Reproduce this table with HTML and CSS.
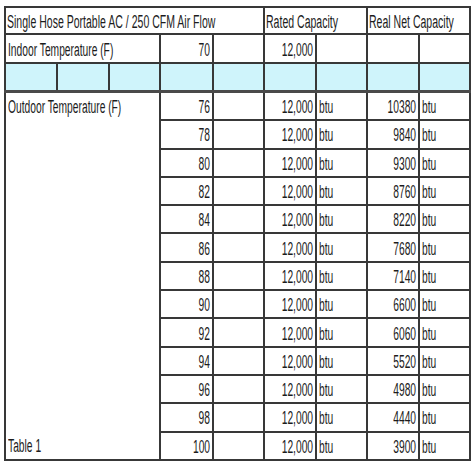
FILE: index.html
```html
<!DOCTYPE html>
<html>
<head>
<meta charset="utf-8">
<link rel="stylesheet" href="styles.css">
</head>
<body>
<table class="sheet">
  <colgroup>
    <col class="w52"><col class="w52"><col class="w51"><col class="w53"><col class="w51"><col class="w52"><col class="w51"><col class="w52"><col class="w51">
  </colgroup>
  <tr class="head">
    <td colspan="5" class="l"><div class="c"><span class="t">Single Hose Portable AC / 250 CFM Air Flow</span></div></td>
    <td colspan="2" class="l"><div class="c"><span class="t">Rated Capacity</span></div></td>
    <td colspan="2" class="l"><div class="c"><span class="t">Real Net Capacity</span></div></td>
  </tr>
  <tr class="indoor">
    <td colspan="3" class="l"><div class="c"><span class="t">Indoor Temperature (F)</span></div></td>
    <td class="r"><div class="c"><span class="t">70</span></div></td>
    <td></td>
    <td class="r"><div class="c"><span class="t">12,000</span></div></td>
    <td></td><td></td><td></td>
  </tr>
  <tr class="band">
    <td></td><td></td><td></td><td></td><td></td><td></td><td></td><td></td><td></td>
  </tr>
  <tr class="row">
    <td colspan="3" rowspan="12" class="l outdoor"><div class="c"><span class="t">Outdoor Temperature (F)</span></div></td>
    <td class="r"><div class="c"><span class="t">76</span></div></td><td></td>
    <td class="r"><div class="c"><span class="t">12,000</span></div></td><td class="l"><div class="c"><span class="t">btu</span></div></td>
    <td class="r"><div class="c"><span class="t">10380</span></div></td><td class="l"><div class="c"><span class="t">btu</span></div></td>
  </tr>
  <tr class="row">
    <td class="r"><div class="c"><span class="t">78</span></div></td><td></td>
    <td class="r"><div class="c"><span class="t">12,000</span></div></td><td class="l"><div class="c"><span class="t">btu</span></div></td>
    <td class="r"><div class="c"><span class="t">9840</span></div></td><td class="l"><div class="c"><span class="t">btu</span></div></td>
  </tr>
  <tr class="row">
    <td class="r"><div class="c"><span class="t">80</span></div></td><td></td>
    <td class="r"><div class="c"><span class="t">12,000</span></div></td><td class="l"><div class="c"><span class="t">btu</span></div></td>
    <td class="r"><div class="c"><span class="t">9300</span></div></td><td class="l"><div class="c"><span class="t">btu</span></div></td>
  </tr>
  <tr class="row">
    <td class="r"><div class="c"><span class="t">82</span></div></td><td></td>
    <td class="r"><div class="c"><span class="t">12,000</span></div></td><td class="l"><div class="c"><span class="t">btu</span></div></td>
    <td class="r"><div class="c"><span class="t">8760</span></div></td><td class="l"><div class="c"><span class="t">btu</span></div></td>
  </tr>
  <tr class="row">
    <td class="r"><div class="c"><span class="t">84</span></div></td><td></td>
    <td class="r"><div class="c"><span class="t">12,000</span></div></td><td class="l"><div class="c"><span class="t">btu</span></div></td>
    <td class="r"><div class="c"><span class="t">8220</span></div></td><td class="l"><div class="c"><span class="t">btu</span></div></td>
  </tr>
  <tr class="row">
    <td class="r"><div class="c"><span class="t">86</span></div></td><td></td>
    <td class="r"><div class="c"><span class="t">12,000</span></div></td><td class="l"><div class="c"><span class="t">btu</span></div></td>
    <td class="r"><div class="c"><span class="t">7680</span></div></td><td class="l"><div class="c"><span class="t">btu</span></div></td>
  </tr>
  <tr class="row">
    <td class="r"><div class="c"><span class="t">88</span></div></td><td></td>
    <td class="r"><div class="c"><span class="t">12,000</span></div></td><td class="l"><div class="c"><span class="t">btu</span></div></td>
    <td class="r"><div class="c"><span class="t">7140</span></div></td><td class="l"><div class="c"><span class="t">btu</span></div></td>
  </tr>
  <tr class="row">
    <td class="r"><div class="c"><span class="t">90</span></div></td><td></td>
    <td class="r"><div class="c"><span class="t">12,000</span></div></td><td class="l"><div class="c"><span class="t">btu</span></div></td>
    <td class="r"><div class="c"><span class="t">6600</span></div></td><td class="l"><div class="c"><span class="t">btu</span></div></td>
  </tr>
  <tr class="row">
    <td class="r"><div class="c"><span class="t">92</span></div></td><td></td>
    <td class="r"><div class="c"><span class="t">12,000</span></div></td><td class="l"><div class="c"><span class="t">btu</span></div></td>
    <td class="r"><div class="c"><span class="t">6060</span></div></td><td class="l"><div class="c"><span class="t">btu</span></div></td>
  </tr>
  <tr class="row">
    <td class="r"><div class="c"><span class="t">94</span></div></td><td></td>
    <td class="r"><div class="c"><span class="t">12,000</span></div></td><td class="l"><div class="c"><span class="t">btu</span></div></td>
    <td class="r"><div class="c"><span class="t">5520</span></div></td><td class="l"><div class="c"><span class="t">btu</span></div></td>
  </tr>
  <tr class="row">
    <td class="r"><div class="c"><span class="t">96</span></div></td><td></td>
    <td class="r"><div class="c"><span class="t">12,000</span></div></td><td class="l"><div class="c"><span class="t">btu</span></div></td>
    <td class="r"><div class="c"><span class="t">4980</span></div></td><td class="l"><div class="c"><span class="t">btu</span></div></td>
  </tr>
  <tr class="row">
    <td class="r"><div class="c"><span class="t">98</span></div></td><td></td>
    <td class="r"><div class="c"><span class="t">12,000</span></div></td><td class="l"><div class="c"><span class="t">btu</span></div></td>
    <td class="r"><div class="c"><span class="t">4440</span></div></td><td class="l"><div class="c"><span class="t">btu</span></div></td>
  </tr>
  <tr class="row">
    <td colspan="3" class="l tail"><div class="c"><span class="t">Table 1</span></div></td>
    <td class="r"><div class="c"><span class="t">100</span></div></td><td></td>
    <td class="r"><div class="c"><span class="t">12,000</span></div></td><td class="l"><div class="c"><span class="t">btu</span></div></td>
    <td class="r"><div class="c"><span class="t">3900</span></div></td><td class="l"><div class="c"><span class="t">btu</span></div></td>
  </tr>
</table>
</body>
</html>
```
FILE: styles.css
```css
html, body {
  margin: 0;
  padding: 0;
  background: #ffffff;
}

.sheet {
  margin: 6px 0 0 4px;
  width: 466px;
  table-layout: fixed;
  border-collapse: collapse;
  border: 2px solid #6b6b6b;
  font-family: "Liberation Sans", Arial, sans-serif;
  font-size: 18px;
  color: #1c1c1c;
}

.w51 { width: 51px; }
.w52 { width: 52px; }
.w53 { width: 53px; }

.sheet td {
  border: 2px solid #383838;
  padding: 0;
  vertical-align: middle;
  overflow: visible;
  white-space: nowrap;
}

.head td { height: 25px; }
.indoor td { height: 27px; }
.band td {
  height: 26px;
  background: #cff4fb;
  border-bottom: 3px solid #4a4a4a;
}
.row td { height: 26.3px; }

.c {
  box-sizing: border-box;
  display: flex;
  align-items: center;
  height: 22px;
  line-height: 1;
  padding-top: 2px;
}

.l .c {
  justify-content: flex-start;
  padding-left: 2px;
}

.r .c {
  justify-content: flex-end;
  padding-right: 2px;
}

.t {
  display: inline-block;
  flex: none;
  transform: scaleX(0.57);
}

.l .t { transform-origin: left center; }
.r .t { transform-origin: right center; }

.head .l .c { padding-left: 1px; }
.head .t { transform: scaleX(0.585); }

.outdoor {
  vertical-align: top !important;
  border-bottom-style: hidden !important;
}

.outdoor .c { height: 26px; }

.tail {
  border-top-style: hidden !important;
}
```
